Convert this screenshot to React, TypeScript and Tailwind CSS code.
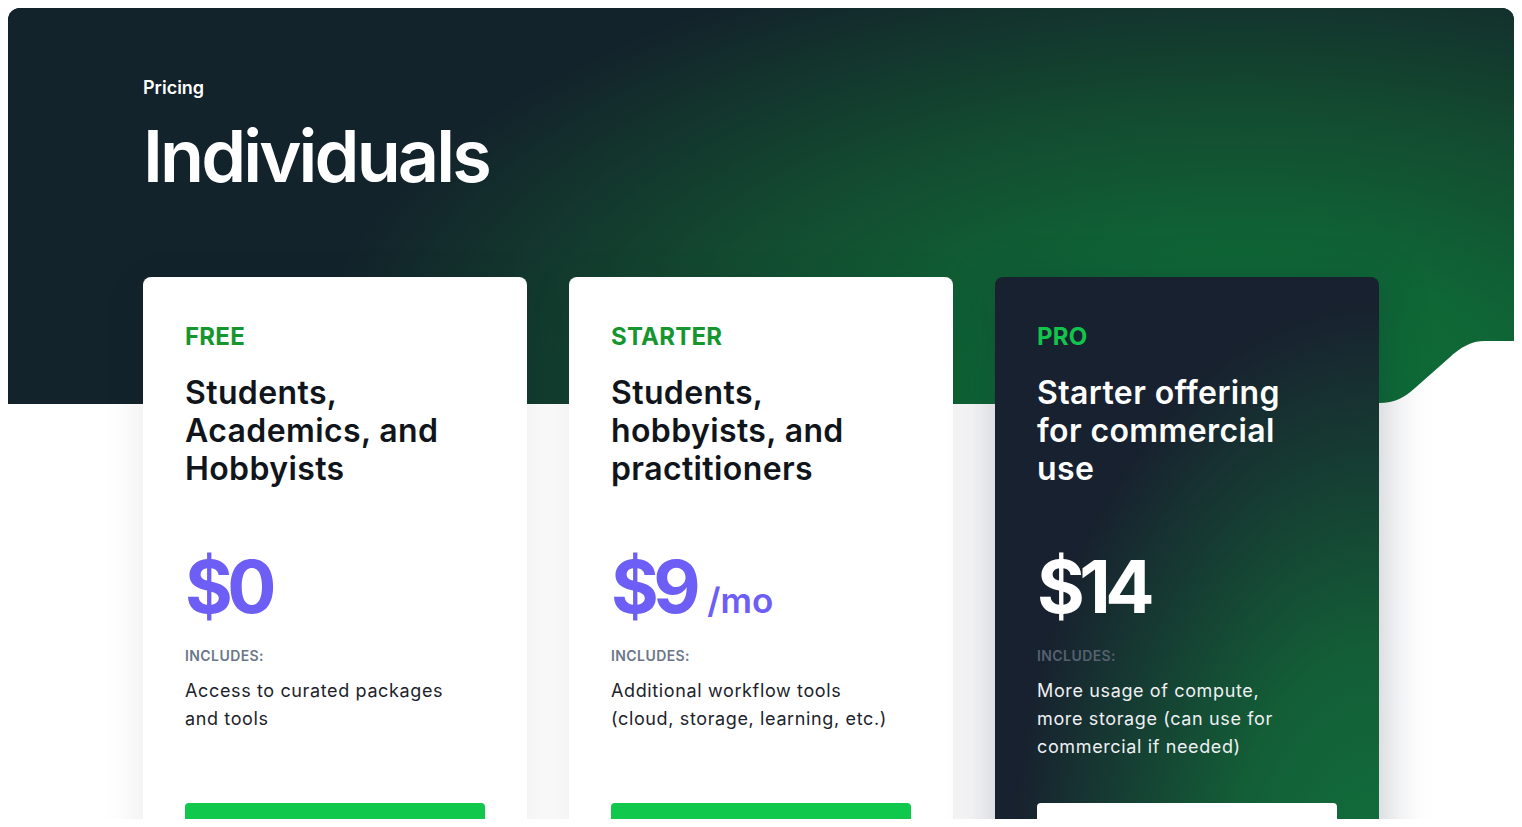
import React from 'react';

type Plan = {
  tier: string;
  title: string[];
  price: string;
  suffix?: string;
  includes: string[];
  dark?: boolean;
};

const plans: Plan[] = [
  {
    tier: 'FREE',
    title: ['Students,', 'Academics, and', 'Hobbyists'],
    price: '$0',
    includes: ['Access to curated packages', 'and tools'],
  },
  {
    tier: 'STARTER',
    title: ['Students,', 'hobbyists, and', 'practitioners'],
    price: '$9',
    suffix: '/mo',
    includes: ['Additional workflow tools', '(cloud, storage, learning, etc.)'],
  },
  {
    tier: 'PRO',
    title: ['Starter offering', 'for commercial', 'use'],
    price: '$14',
    includes: ['More usage of compute,', 'more storage (can use for', 'commercial if needed)'],
    dark: true,
  },
];

const Lines: React.FC<{ lines: string[] }> = ({ lines }) => (
  <>
    {lines.map((l, i) => (
      <React.Fragment key={i}>
        {i > 0 && <br />}
        {l}
      </React.Fragment>
    ))}
  </>
);

const PlanCard: React.FC<{ plan: Plan }> = ({ plan }) => {
  const dark = plan.dark;
  return (
    <div
      className={
        dark
          ? 'rounded-lg bg-[#18212f] bg-[radial-gradient(ellipse_at_100%_100%,#11713c_0%,#135e37_28%,rgba(24,33,47,0)_68%)] px-[42px] pt-[44px] pb-[42px] shadow-[0_10px_50px_rgba(15,23,42,0.28)]'
          : 'rounded-lg bg-white px-[42px] pt-[44px] pb-[42px] shadow-[0_10px_45px_rgba(15,23,42,0.09)]'
      }
    >
      <p className={`text-[24px] font-bold leading-8 tracking-[0.01em] ${dark ? 'text-[#13c44c]' : 'text-[#16962f]'}`}>
        {plan.tier}
      </p>
      <h2
        className={`mt-[21px] h-[114px] whitespace-nowrap text-[32px] font-semibold leading-[38px] tracking-[0.012em] ${
          dark ? 'text-white' : 'text-[#10151b]'
        }`}
      >
        <Lines lines={plan.title} />
      </h2>
      <div className="mt-[62px] flex items-baseline">
        <span
          className={`text-[73px] font-bold leading-none tracking-[-0.075em] ${dark ? 'text-white' : 'text-[#6d5ef6]'}`}
        >
          {plan.price}
        </span>
        {plan.suffix && (
          <span className="ml-[12px] text-[35px] font-semibold leading-none text-[#6d5ef6]">{plan.suffix}</span>
        )}
      </div>
      <p
        className={`mt-[23px] text-[14px] font-semibold leading-5 tracking-[0.03em] ${
          dark ? 'text-[#566172]' : 'text-[#6b7788]'
        }`}
      >
        INCLUDES:
      </p>
      <p
        className={`mt-[11px] h-[84px] whitespace-nowrap text-[18px] leading-7 tracking-[0.035em] ${
          dark ? 'text-[#eef0f3]' : 'text-[#1c232b]'
        }`}
      >
        <Lines lines={plan.includes} />
      </p>
      <button
        className={`mt-[42px] h-12 w-full rounded ${dark ? 'bg-white' : 'bg-[#10c84b]'}`}
        aria-label={`Choose ${plan.tier}`}
      />
    </div>
  );
};

const App: React.FC = () => {
  return (
    <div className="min-h-screen bg-white p-2 font-['Inter',sans-serif]">
      <div className="h-[811px] overflow-hidden rounded-xl bg-white">
        <section className="relative h-[396px] bg-[#13232b] bg-[radial-gradient(ellipse_62%_115%_at_82%_95%,#0e7339_0%,#0f6636_28%,#134a30_62%,#13232b_100%)]">
          <div className="mx-auto max-w-[1236px] pt-[66px]">
            <p className="text-[18px] font-semibold leading-7 text-white">Pricing</p>
            <h1 className="mt-[18px] text-[72px] font-semibold leading-none tracking-[-0.04em] text-white">
              Individuals
            </h1>
          </div>
          <svg
            className="absolute bottom-0 right-0"
            width="135"
            height="63"
            viewBox="0 0 135 63"
            fill="none"
          >
            <path d="M0 63 L0 62 C16 62 26 56 36 47 L70 17 C82 6 92 0 106 0 L135 0 L135 63 Z" fill="#ffffff" />
          </svg>
        </section>
        <div className="relative mx-auto -mt-[127px] grid max-w-[1236px] grid-cols-3 gap-[42px]">
          {plans.map(p => (
            <PlanCard key={p.tier} plan={p} />
          ))}
        </div>
      </div>
    </div>
  );
};

export default App;
